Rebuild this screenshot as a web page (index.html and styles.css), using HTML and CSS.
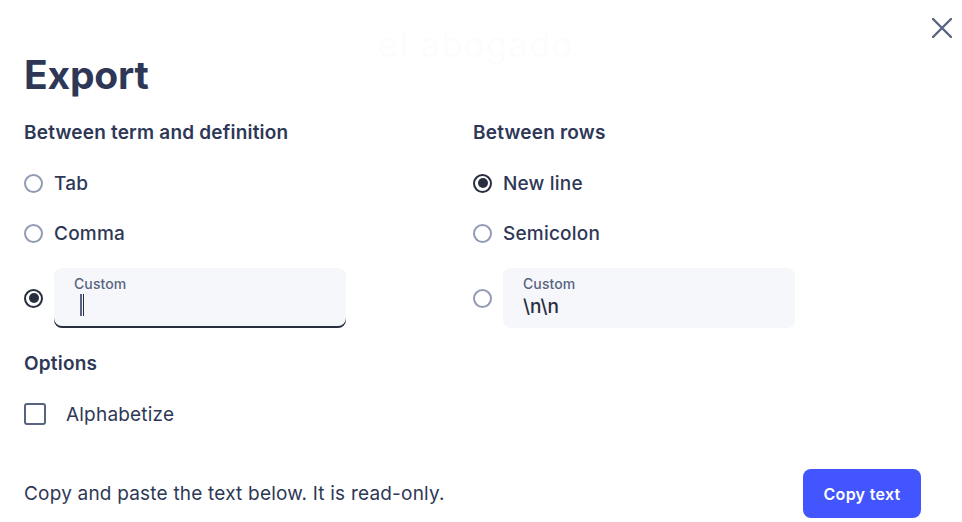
FILE: index.html
```html
<!DOCTYPE html>
<html lang="en">
<head>
<meta charset="utf-8">
<title>Export</title>
<link rel="stylesheet" href="styles.css">
</head>
<body>
<div class="modal">
  <button class="close" aria-label="Close">
    <svg width="20" height="20" viewBox="0 0 20 20"><path d="M1 1L19 19M19 1L1 19" stroke="#586380" stroke-width="2.4" stroke-linecap="round"/></svg>
  </button>
  <div class="ghost">el abogado</div>
  <h1 class="title">Export</h1>
  <div class="cols">
    <div class="col">
      <h2 class="heading">Between term and definition</h2>
      <label class="radio-row"><span class="radio"></span><span class="label">Tab</span></label>
      <label class="radio-row"><span class="radio"></span><span class="label">Comma</span></label>
      <div class="radio-row custom-row">
        <span class="radio checked"></span>
        <div class="field focused">
          <span class="field-label">Custom</span>
          <span class="field-value field-caret"><span class="caret"></span></span>
        </div>
      </div>
    </div>
    <div class="col">
      <h2 class="heading">Between rows</h2>
      <label class="radio-row"><span class="radio checked"></span><span class="label">New line</span></label>
      <label class="radio-row"><span class="radio"></span><span class="label">Semicolon</span></label>
      <div class="radio-row custom-row">
        <span class="radio"></span>
        <div class="field">
          <span class="field-label">Custom</span>
          <span class="field-value">\n\n</span>
        </div>
      </div>
    </div>
  </div>
  <h2 class="heading options">Options</h2>
  <label class="check-row"><span class="checkbox"></span><span class="check-label">Alphabetize</span></label>
  <div class="footer">
    <p class="hint">Copy and paste the text below. It is read-only.</p>
    <button class="copy">Copy text</button>
  </div>
</div>
</body>
</html>
```
FILE: styles.css
```css
* { box-sizing: border-box; }
html, body { margin: 0; padding: 0; background: #fff; }
body { font-family: Inter, "Noto Sans", sans-serif; color: #2e3856; }
.modal { position: relative; width: 962px; height: 522px; padding: 50px 41px 0 24px; overflow: hidden; }
.close { position: absolute; top: 18px; right: 10px; width: 20px; height: 20px; padding: 0; border: 0; background: none; display: flex; }
.ghost { position: absolute; top: 24px; left: 378px; font-size: 34px; font-weight: 300; color: #fcfcfd; letter-spacing: 2px; }
.title { margin: 0; font-size: 39px; font-weight: 700; line-height: 50px; color: #2e3856; letter-spacing: -0.2px; }
.cols { display: grid; grid-template-columns: 449px 1fr; margin-top: 20px; }
.heading { margin: 0; font-size: 19px; font-weight: 600; line-height: 26px; color: #2e3856; letter-spacing: 0.2px; }
.radio-row { display: flex; align-items: center; gap: 11px; height: 50px; }
.col .heading + .radio-row { margin-top: 12px; }
.custom-row { height: 60px; margin-top: 10px; }
.radio { width: 19px; height: 19px; border-radius: 50%; border: 2px solid #939bb4; flex: none; position: relative; }
.radio.checked { border-color: #282e3e; }
.radio.checked::after { content: ""; position: absolute; inset: 2.5px; border-radius: 50%; background: #282e3e; }
.label { font-size: 19px; font-weight: 500; color: #2e3856; letter-spacing: 0.2px; }
.field { width: 292px; height: 60px; border-radius: 8px; background: #f6f7fb; padding: 8px 20px 0; display: flex; flex-direction: column; position: relative; }
.field.focused { box-shadow: inset 0 -2px 0 #282e3e; }
.field-label { font-size: 14px; font-weight: 500; color: #586380; line-height: 16px; letter-spacing: 0.1px; }
.field-value { font-size: 19px; font-weight: 500; color: #282e3e; line-height: 26px; margin-top: 2px; }
.field-caret { display: flex; align-items: center; padding-left: 6px; }
.caret { height: 22px; border-left: 2px solid #586380; border-right: 1px solid #282e3e; width: 4px; }
.options { margin-top: 23px; }
.check-row { display: flex; align-items: center; gap: 20px; margin-top: 26px; height: 22px; }
.checkbox { width: 22px; height: 22px; border: 2px solid #586380; border-radius: 3px; flex: none; }
.check-label { font-size: 19px; font-weight: 400; color: #2e3856; letter-spacing: 0.2px; }
.footer { display: flex; justify-content: space-between; align-items: center; margin-top: 44px; }
.hint { margin: 0; font-size: 19px; font-weight: 400; color: #2e3856; letter-spacing: 0.2px; }
.copy { width: 118px; height: 49px; border: 0; border-radius: 8px; background: #4255ff; color: #fff; font-family: Inter, "Noto Sans", sans-serif; font-size: 16px; font-weight: 600; letter-spacing: 0.3px; }
```
